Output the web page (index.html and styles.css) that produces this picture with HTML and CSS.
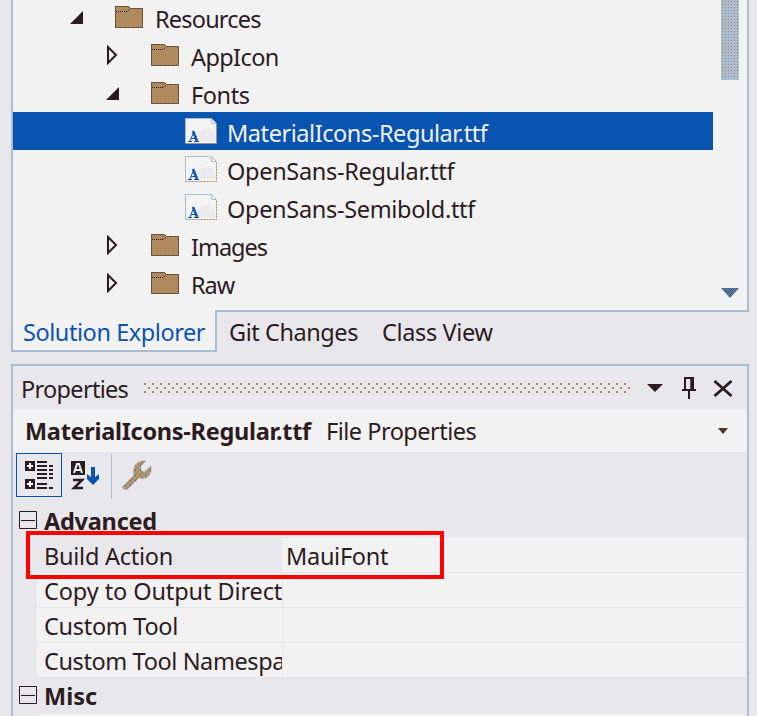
FILE: index.html
```html
<!DOCTYPE html>
<html lang="en">
<head>
<meta charset="utf-8">
<title>Solution Explorer</title>
<link rel="stylesheet" href="styles.css">
</head>
<body>
<svg width="0" height="0" class="defs" aria-hidden="true">
  <defs>
    <pattern id="scrollDots" width="3" height="3" patternUnits="userSpaceOnUse"><rect x="1" y="1" width="1" height="1" fill="#ae8a5e"/></pattern>
    <pattern id="gripDots" width="8" height="10" patternUnits="userSpaceOnUse"><path d="M0 0h2v2H0zM4 4h2v2H4zM0 8h2v2H0z" fill="#ae8a5e"/></pattern>
    <pattern id="blueDots" width="2" height="2" patternUnits="userSpaceOnUse"><rect width="2" height="2" fill="#1458a8"/><path d="M0 0h1v1H0zM1 1h1v1H1z" fill="#8b8178"/></pattern>
    <pattern id="wrenchDots" width="5" height="5" patternUnits="userSpaceOnUse"><rect width="5" height="5" fill="#ae9068"/><path d="M1 1h1v1H1zM3 3h1v1H3z" fill="#a9bed2"/><path d="M4 1h1v1H4z" fill="#3c6c9f"/></pattern>
    <symbol id="folder" viewBox="0 0 28 22"><path d="M.5.5h13l2 2h12v19H.5z" fill="#ae8a5e" stroke="#ae8a5e"/><path d="M.5.5h13l2 2h12v19H.5zM1 5.5h11.500l2-2.500" fill="none" stroke="#2c1c1f" stroke-dasharray="1 1"/></symbol>
    <symbol id="font" viewBox="0 0 32 26"><path d="M.5.5h26l5 5v20H.5z" fill="#f3f3f4"/><path d="M11 23c0-7 5-12 11-12 5 0 8 5 9 12z" fill="#eaeaee"/><path d="M.5 25V.5h26l5 5M26.500 1v4.500H31" fill="none" stroke="#a9bed2"/><path d="M.5 25.500h31V6" fill="none" stroke="#ae8a5e" stroke-dasharray="2 1"/><path d="M3 23.500h4M9 23.500h5M5 23 8.500 14.500M6 20.500h4" stroke="#0854b0" fill="none"/><path d="m8 13 4 10" stroke="#0854b0" stroke-width="2.500"/></symbol>
    <symbol id="closed" viewBox="0 0 11 20"><path d="M1 2v16l8-8z" fill="none" stroke="#2c1c1f" stroke-width="2"/></symbol>
    <symbol id="open" viewBox="0 0 13 13"><path d="M13 0v13H0z" fill="#2c1c1f"/></symbol>
    <symbol id="minus" viewBox="0 0 18 18"><path d="M.5.5h17v17H.5zM2 9.500h14" fill="none" stroke="#2c1c1f"/></symbol>
  </defs>
</svg>
<main class="window">
  <section class="explorer">
    <div class="tree">
      <div class="row l0"><svg class="open"><use href="#open"/></svg><svg class="folder"><use href="#folder"/></svg><span class="t-res">Resources</span></div>
      <div class="row l1"><svg class="closed"><use href="#closed"/></svg><svg class="folder"><use href="#folder"/></svg><span class="t-app">AppIcon</span></div>
      <div class="row l1"><svg class="open"><use href="#open"/></svg><svg class="folder"><use href="#folder"/></svg><span class="t-fonts">Fonts</span></div>
      <div class="row file selected"><svg class="font"><use href="#font"/></svg><span class="t-mat">MaterialIcons-Regular.ttf</span></div>
      <div class="row file"><svg class="font"><use href="#font"/></svg><span class="t-osr">OpenSans-Regular.ttf</span></div>
      <div class="row file"><svg class="font"><use href="#font"/></svg><span class="t-oss">OpenSans-Semibold.ttf</span></div>
      <div class="row l1"><svg class="closed"><use href="#closed"/></svg><svg class="folder"><use href="#folder"/></svg><span class="t-img">Images</span></div>
      <div class="row l1"><svg class="closed"><use href="#closed"/></svg><svg class="folder"><use href="#folder"/></svg><span class="t-raw">Raw</span></div>
    </div>
    <div class="scroll">
      <svg width="18" height="80"><rect width="18" height="80" fill="#a9bed2"/><rect width="17" height="79" fill="url(#scrollDots)"/></svg>
      <svg width="18" height="11"><path d="M0 0h18L9 10z" fill="url(#blueDots)"/></svg>
    </div>
  </section>
  <nav class="tabs">
    <div class="tab active"><span class="t-sol">Solution Explorer</span></div>
    <div class="tab git"><span class="t-git">Git Changes</span></div>
    <div class="tab class"><span class="t-class">Class View</span></div>
  </nav>
  <section class="properties">
    <header class="title">
      <span class="t-prop">Properties</span>
      <svg class="grip" width="486" height="10"><rect width="486" height="10" fill="url(#gripDots)"/></svg>
      <svg class="down" width="16" height="8"><path d="M0 0h16L8 8z" fill="#2c1c1f"/></svg>
      <svg class="pin" width="14" height="22"><path d="M3 13V1h8v12M0 13h14M7 13v9" fill="none" stroke="#2c1c1f" stroke-width="2"/><path d="M9.500 1v12" stroke="#2c1c1f" stroke-width="2.500"/></svg>
      <svg class="close" width="20" height="17"><path d="M1.500 1 18.500 16M18.500 1 1.500 16" stroke="#2c1c1f" stroke-width="2.800"/></svg>
    </header>
    <div class="object"><b class="t-obj">MaterialIcons-Regular.ttf</b><span class="t-file">File Properties</span><svg width="10" height="6"><path d="M0 0h10L5 6z" fill="#4a3630"/></svg></div>
    <div class="toolbar">
      <div class="mode"><svg width="28" height="28"><path d="M0 0h10v10H0zM0 18h10v10H0z" fill="#2c1c1f"/><path d="M2 5h6M5 2v6M2 23h6M5 20v6" stroke="#fff" stroke-width="2"/><path d="M12 1h10M12 5h10M12 9h10M12 13h10M12 17h10M12 23h10M12 27h10M24 5h4M24 9h4M24 13h4M24 17h4M24 27h4" stroke="#2c1c1f" stroke-width="2"/></svg></div>
      <svg class="sort" width="29" height="29"><path d="M0 0h14v14H0z" fill="#2c1c1f"/><path d="M3 12 6 3h2l3 9M4 9h6" fill="none" stroke="#f2f2f2" stroke-width="2"/><path d="M2 19h9L3 27h9" fill="none" stroke="#2c1c1f" stroke-width="2.600"/><path d="M20 6h4v10l4-3v5l-6 6-6-6v-5l4 3z" fill="#0854b0"/></svg>
      <i class="divider"></i>
      <svg class="wrench" width="32" height="32"><path d="m2 27 11-11C10 8 17 0 25 2l-5 5v4l3 2 7-6c2 9-5 15-12 12L7 30c-3 2-7-1-5-3z" fill="url(#wrenchDots)" stroke="#a9bed2" stroke-dasharray="1 1"/></svg>
    </div>
    <div class="grid">
      <div class="category"><svg class="minus"><use href="#minus"/></svg><b class="t-adv">Advanced</b></div>
      <div class="prop current"><div class="name"><span class="t-build">Build Action</span></div><div class="value"><span class="t-maui">MauiFont</span></div><div class="highlight"></div></div>
      <div class="prop"><div class="name"><span class="t-copy">Copy to Output Direct</span></div><div class="value"></div></div>
      <div class="prop"><div class="name"><span class="t-tool">Custom Tool</span></div><div class="value"></div></div>
      <div class="prop last"><div class="name"><span class="t-ns">Custom Tool Namespa</span></div><div class="value"></div></div>
      <div class="category misc"><svg class="minus"><use href="#minus"/></svg><b class="t-misc">Misc</b></div>
      <div class="prop"><div class="name"></div><div class="value"></div></div>
    </div>
  </section>
</main>
</body>
</html>
```
FILE: styles.css
```css
* { box-sizing: border-box; }
body { margin: 0; width: 757px; height: 716px; overflow: hidden; background: #e8e8ec; color: #2c1c1f; font: 23.5px/34px "Noto Sans", "Open Sans", sans-serif; }
svg { display: block; flex: none; }
span, b { white-space: nowrap; }
.defs { position: absolute; }
.window { width: 738px; height: 716px; margin-left: 11px; overflow: hidden; }
.explorer { display: flex; justify-content: space-between; height: 312px; overflow: hidden; border: 2px solid #a9bed2; border-top: 0; background: #f2f2f3; }
.tree { width: 700px; margin-top: -2px; }
.row { display: flex; align-items: center; height: 38px; }
.row span { margin-top: 4px; }
.l0 { padding-left: 57px; }
.l1 { padding-left: 93px; }
.open { width: 13px; height: 13px; margin-right: 32px; }
.closed { width: 11px; height: 20px; margin: 0 33px 0 1px; }
.l0 .open, .l1 .open { margin-top: 1px; }
.folder { width: 28px; height: 22px; margin-right: 12px; }
.l1 .folder { margin-top: -1px; }
.l0 .folder { margin-top: -1px; }
.file { padding-left: 172px; }
.font { width: 32px; height: 26px; margin: 0 10px 0 0; }
.selected { background: #0854b0; color: #f2f2f2; }
.scroll { width: 18px; margin-right: 8px; display: flex; flex-direction: column; justify-content: space-between; padding-bottom: 11px; }
.tabs { display: flex; height: 40px; }
.tab { height: 40px; padding-top: 3px; }
.active { width: 206px; margin-top: -2px; height: 42px; padding: 5px 0 0 10px; background: #f2f2f3; color: #0854b0; border: 2px solid #a9bed2; border-top: 0; }
.git { width: 153px; padding-left: 12px; }
.class { padding-left: 12px; }
.properties { margin-top: 12px; height: 360px; border: 2px solid #a9bed2; border-bottom: 0; }
.title { display: flex; align-items: center; height: 44px; padding-left: 8px; }
.title span { width: 123px; margin-top: 2px; }
.down { margin-left: 17px; margin-top: 0; }
.pin { margin-left: 19px; }
.close { margin-left: 17px; }
.object { display: flex; align-items: center; height: 42px; background: #f2f2f2; padding: 0 19px 1px 12px; }
.object b { width: 301px; }
.object svg { margin-left: auto; }
.toolbar { display: flex; align-items: flex-start; height: 52px; }
.mode { display: flex; width: 46px; height: 44px; margin: 1px 0 0 3px; border: 1px solid #0854b0; padding: 7px 0 0 8px; }
.sort { margin: 9px 0 0 9px; }
.divider { width: 1px; height: 45px; margin: 2px 0 0 11px; background: #a9bed2; }
.wrench { margin: 7px 0 0 9px; }
.category { display: flex; height: 34px; padding-left: 6px; }
.misc { height: 36px; }
.minus { width: 18px; height: 18px; margin: 7px 7px 0 0; }
.misc .minus { margin-top: 8px; }
.category b { margin-top: 0; }
.misc b { margin-top: 1px; }
.prop { position: relative; display: flex; height: 35px; margin-left: 24px; }
.name { width: 245px; padding-left: 7px; background: #f2f2f3; border-bottom: 1px solid #e5e5ea; }
.value { flex: 1; margin-right: 1px; padding-left: 3px; background: #f2f2f3; border-left: 1px solid #e5e5ea; border-bottom: 1px solid #e5e5ea; }
.current .name { background: #e8e8ec; }
.current .value { border-left-color: #f2f2f2; }
.name span, .value span { display: inline-block; margin-top: 1px; }
.highlight { position: absolute; left: -11px; top: -7px; width: 418px; height: 48px; border: 4px solid #f00; z-index: 1; }
.t-res { letter-spacing: -.8px; }
.t-app { letter-spacing: -.6px; }
.t-fonts { letter-spacing: -.4px; }
.t-mat { letter-spacing: -.44px; }
.t-osr { letter-spacing: -.31px; }
.t-oss { letter-spacing: -.32px; }
.t-img { letter-spacing: -1px; }
.t-raw { letter-spacing: -1px; }
.t-sol { letter-spacing: -.44px; }
.t-git { letter-spacing: -.44px; }
.t-class { letter-spacing: -.35px; }
.t-prop { letter-spacing: -.7px; }
.t-obj { letter-spacing: -.29px; }
.t-file { letter-spacing: -.5px; }
.t-adv { letter-spacing: -.25px; }
.t-build { letter-spacing: -.25px; }
.t-maui { letter-spacing: -.3px; }
.t-copy { letter-spacing: -.1px; }
.t-tool { letter-spacing: -.3px; }
.t-ns { letter-spacing: -.4px; }
```
